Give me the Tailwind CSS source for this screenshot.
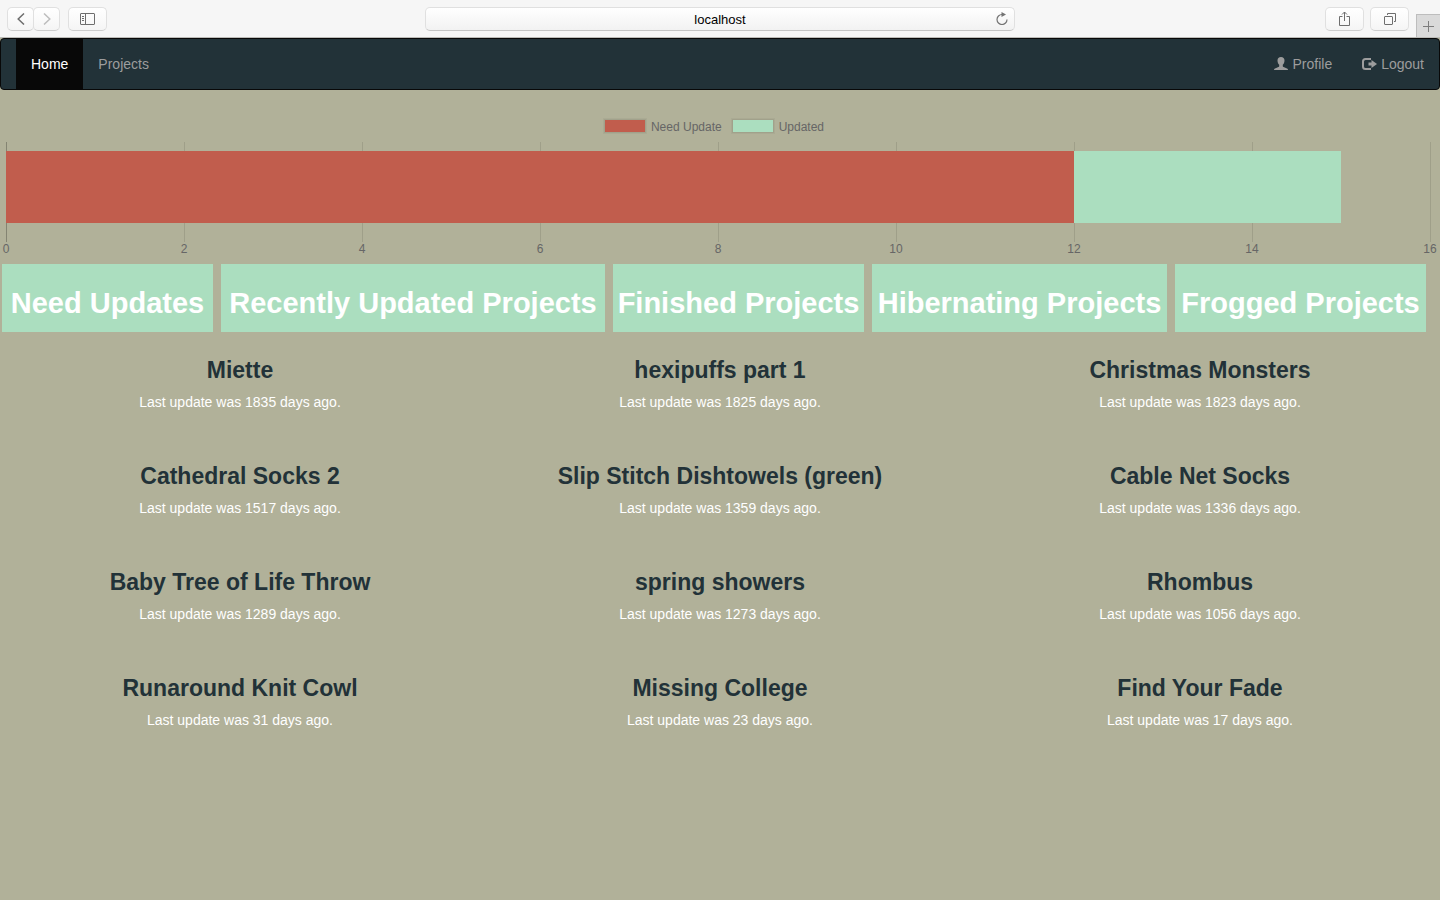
<!DOCTYPE html>
<html lang="en">
<head>
<meta charset="utf-8">
<meta name="viewport" content="width=device-width, initial-scale=1">
<title>Projects dashboard</title>
<script src="https://cdn.jsdelivr.net/npm/@tailwindcss/browser@4"></script>
</head>
<body class="flex min-h-screen flex-col overflow-x-hidden bg-[#b1b199] font-['Liberation_Sans',Arial,sans-serif] text-sm text-white">

<!-- Browser toolbar -->
<header class="flex h-[38px] shrink-0 items-center border-b border-[#bcbcb8] bg-[#f6f6f6] text-[#6e6e6e]">
  <div class="flex flex-1 items-center">
    <button aria-label="Back" class="ml-[7px] flex h-6 w-[27px] items-center justify-center rounded-[5px] border border-[#e0e0e0] border-b-[#cdcdcd] bg-linear-to-b from-white to-[#f5f5f5]">
      <svg class="h-3 w-2" viewBox="0 0 8 12" fill="none" stroke="#6e6e6e" stroke-width="1.5"><path d="M7 .5 1.2 6 7 11.500"/></svg>
    </button>
    <button aria-label="Forward" class="-ml-px flex h-6 w-[27px] items-center justify-center rounded-[5px] border border-[#e0e0e0] border-b-[#cdcdcd] bg-linear-to-b from-white to-[#f5f5f5]">
      <svg class="h-3 w-2" viewBox="0 0 8 12" fill="none" stroke="#bdbdbd" stroke-width="1.5"><path d="M1 .5 6.800 6 1 11.500"/></svg>
    </button>
    <button aria-label="Sidebar" class="ml-2 flex h-6 w-[39px] items-center justify-center rounded-[5px] border border-[#e0e0e0] border-b-[#cdcdcd] bg-linear-to-b from-white to-[#f5f5f5]">
      <svg class="h-3 w-[15px]" viewBox="0 0 15 12" fill="none" stroke="#6e6e6e"><rect x=".5" y=".5" width="14" height="11" rx=".5"/><path d="M5.500 1v10M2 3.500h2M2 5.500h2M2 7.500h2"/></svg>
    </button>
  </div>
  <div class="flex h-6 w-[41%] shrink-0 items-center rounded-[5px] border border-[#e0e0e0] border-b-[#c4c4c4] bg-linear-to-b from-white to-[#f2f2f2] pr-1.5 pl-[18px]">
    <input aria-label="Address" value="localhost" class="h-full min-w-0 flex-1 bg-transparent pt-0.5 text-center text-[13px] text-black outline-none">
    <button aria-label="Reload" class="flex">
      <svg class="h-[13px] w-3" viewBox="0 0 12 13" fill="none" stroke="#737373" stroke-width="1.200"><path d="M6.500 2.500H6A5 5 0 1 0 11 7.500"/><path d="M5.500 0v5l4.500-2.500z" fill="#737373" stroke="none"/></svg>
    </button>
  </div>
  <div class="flex flex-1 items-center justify-end self-stretch">
    <button aria-label="Share" class="flex h-6 w-[39px] items-center justify-center rounded-[5px] border border-[#e0e0e0] border-b-[#cdcdcd] bg-linear-to-b from-white to-[#f5f5f5]">
      <svg class="-mt-px h-[15px] w-[11px]" viewBox="0 0 11 15" fill="none" stroke="#6e6e6e"><path d="M3.500 5.500h-3v9h10v-9h-3M5.500 10V1M3 3.500 5.500 1 8 3.500"/></svg>
    </button>
    <button aria-label="Show all tabs" class="ml-1.5 flex h-6 w-[39px] items-center justify-center rounded-[5px] border border-[#e0e0e0] border-b-[#cdcdcd] bg-linear-to-b from-white to-[#f5f5f5]">
      <svg class="h-3 w-3" viewBox="0 0 12 12" fill="none" stroke="#6e6e6e"><rect x=".5" y="3.500" width="8" height="8" rx=".5"/><path d="M3.500 2V.5h8v8H10"/></svg>
    </button>
    <button aria-label="New tab" class="ml-[7px] flex h-[23px] w-6 items-center justify-center self-end border-t border-l border-[#bdbdbd] bg-[#dadada]">
      <svg class="h-[11px] w-[11px]" viewBox="0 0 11 11" stroke="#7d7d7d"><path d="M5.500 0v11M0 5.500h11"/></svg>
    </button>
  </div>
</header>

<nav class="flex h-[52px] shrink-0 items-stretch justify-between rounded border border-[#080808] bg-[#223238] pl-[15px] text-[#9d9d9d]">
  <div class="flex">
    <a href="#" class="flex items-center bg-[#080808] px-[15px] text-white">Home</a>
    <a href="#" class="flex items-center px-[15px]">Projects</a>
  </div>
  <div class="flex">
    <a href="#" class="flex items-center gap-1 px-[15px]">
      <svg class="h-3.5 w-3.5" viewBox="0 0 14 14" fill="currentColor"><path d="M7 0C4.800 0 3.500 1.400 3.500 3.500c0 1.700.7 3.300 1.700 4.200v1.500c0 .4-.3.7-.8.9L1 11.500c-.7.300-1 .8-1 1.500h14c0-.7-.3-1.200-1-1.500l-3.400-1.400c-.5-.2-.8-.5-.8-.9V7.700c1-.9 1.700-2.500 1.700-4.200C10.500 1.400 9.200 0 7 0z"/></svg>Profile</a>
    <a href="#" class="flex items-center gap-1 px-[15px]">
      <svg class="h-3 w-[15px]" viewBox="0 0 15 12" fill="none" stroke="currentColor"><path stroke-width="2" d="M9 1H3.500Q1 1 1 3.500v5Q1 11 3.500 11H9"/><path d="M6.500 4.500h3V2L15 6l-5.500 4V7.500h-3z" fill="currentColor" stroke="none"/></svg>Logout</a>
  </div>
</nav>

<main>
  <!-- Stacked bar chart: 12 projects need an update, 3 are updated, on a 0-16 axis -->
  <section aria-label="Update status" class="pt-[29px] text-xs text-[#666]">
    <div class="mr-3 flex h-4 items-start justify-center">
      <span class="mr-[5px] h-3.5 w-[42px] border border-[#a1a18b] bg-[#c15d4d] ring-1 ring-[#aaaa93]"></span>
      <span class="mr-[10px]">Need Update</span>
      <span class="mr-[5px] h-3.5 w-[42px] border border-[#a1a18b] bg-[#abdebf] ring-1 ring-[#aaaa93]"></span>
      <span>Updated</span>
    </div>
    <div class="mt-[7px] mr-[10px] ml-[6px] grid h-[100px]">
      <div class="col-start-1 row-start-1 grid grid-cols-8">
        <div class="border-l border-black/25"></div>
        <div class="border-l border-black/10"></div>
        <div class="border-l border-black/10"></div>
        <div class="border-l border-black/10"></div>
        <div class="border-l border-black/10"></div>
        <div class="border-l border-black/10"></div>
        <div class="border-l border-black/10"></div>
        <div class="-mr-px border-x border-black/10"></div>
      </div>
      <div class="z-10 col-start-1 row-start-1 mt-[9px] flex h-[72px]">
        <div class="bg-[#c15d4d]" style="width:75%"></div>
        <div class="bg-[#abdebf]" style="width:18.75%"></div>
      </div>
    </div>
    <div class="mr-[10px] ml-[6px] flex h-[22px] justify-between leading-[14px]">
      <span class="flex w-0 justify-center">0</span>
      <span class="flex w-0 justify-center">2</span>
      <span class="flex w-0 justify-center">4</span>
      <span class="flex w-0 justify-center">6</span>
      <span class="flex w-0 justify-center">8</span>
      <span class="flex w-0 justify-center">10</span>
      <span class="flex w-0 justify-center">12</span>
      <span class="flex w-0 justify-center">14</span>
      <span class="flex w-0 justify-center">16</span>
    </div>
  </section>

  <div class="mr-3.5 ml-0.5 grid grid-cols-[211fr_384fr_251fr_295fr_251fr] gap-x-2 text-[29px] font-bold whitespace-nowrap">
    <button class="flex h-[68px] items-center justify-center bg-[#abdebf] pt-3">Need Updates</button>
    <button class="flex h-[68px] items-center justify-center bg-[#abdebf] pt-3">Recently Updated Projects</button>
    <button class="flex h-[68px] items-center justify-center bg-[#abdebf] pt-3">Finished Projects</button>
    <button class="flex h-[68px] items-center justify-center bg-[#abdebf] pt-3">Hibernating Projects</button>
    <button class="flex h-[68px] items-center justify-center bg-[#abdebf] pt-3">Frogged Projects</button>
  </div>

  <section aria-label="Projects that need updates" class="mt-6 grid grid-cols-3 gap-y-[50px] text-center">
    <article><h3 class="mb-2 text-[23px] leading-7 font-bold text-[#223238]">Miette</h3><p>Last update was 1835 days ago.</p></article>
    <article><h3 class="mb-2 text-[23px] leading-7 font-bold text-[#223238]">hexipuffs part 1</h3><p>Last update was 1825 days ago.</p></article>
    <article><h3 class="mb-2 text-[23px] leading-7 font-bold text-[#223238]">Christmas Monsters</h3><p>Last update was 1823 days ago.</p></article>
    <article><h3 class="mb-2 text-[23px] leading-7 font-bold text-[#223238]">Cathedral Socks 2</h3><p>Last update was 1517 days ago.</p></article>
    <article><h3 class="mb-2 text-[23px] leading-7 font-bold text-[#223238]">Slip Stitch Dishtowels (green)</h3><p>Last update was 1359 days ago.</p></article>
    <article><h3 class="mb-2 text-[23px] leading-7 font-bold text-[#223238]">Cable Net Socks</h3><p>Last update was 1336 days ago.</p></article>
    <article><h3 class="mb-2 text-[23px] leading-7 font-bold text-[#223238]">Baby Tree of Life Throw</h3><p>Last update was 1289 days ago.</p></article>
    <article><h3 class="mb-2 text-[23px] leading-7 font-bold text-[#223238]">spring showers</h3><p>Last update was 1273 days ago.</p></article>
    <article><h3 class="mb-2 text-[23px] leading-7 font-bold text-[#223238]">Rhombus</h3><p>Last update was 1056 days ago.</p></article>
    <article><h3 class="mb-2 text-[23px] leading-7 font-bold text-[#223238]">Runaround Knit Cowl</h3><p>Last update was 31 days ago.</p></article>
    <article><h3 class="mb-2 text-[23px] leading-7 font-bold text-[#223238]">Missing College</h3><p>Last update was 23 days ago.</p></article>
    <article><h3 class="mb-2 text-[23px] leading-7 font-bold text-[#223238]">Find Your Fade</h3><p>Last update was 17 days ago.</p></article>
  </section>
</main>
</body>
</html>
